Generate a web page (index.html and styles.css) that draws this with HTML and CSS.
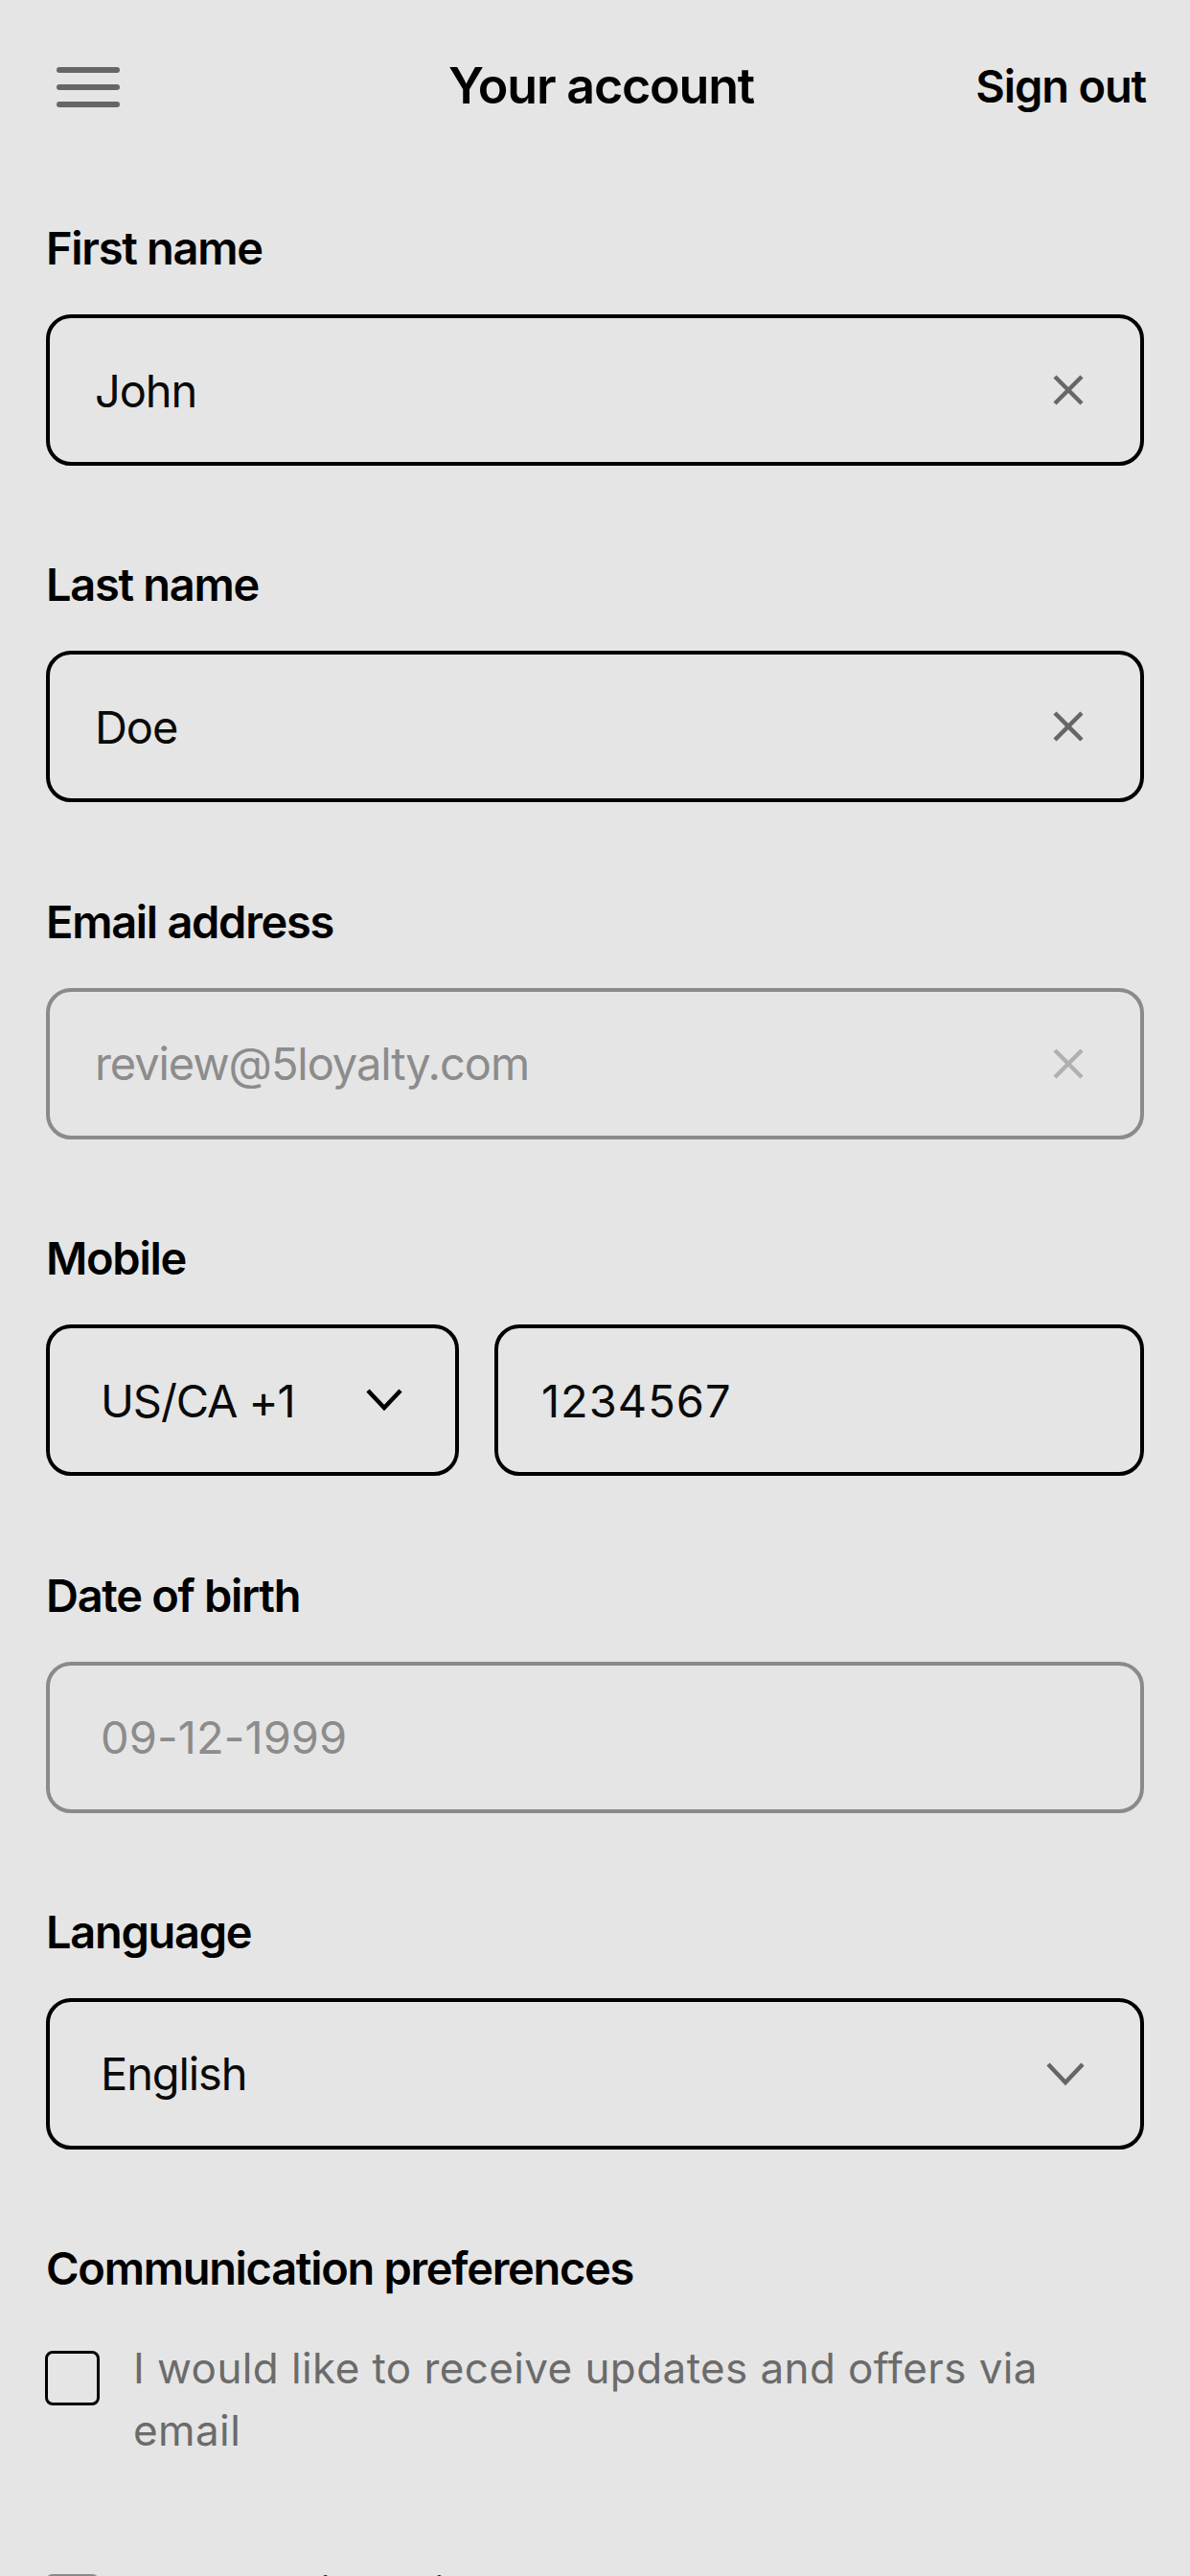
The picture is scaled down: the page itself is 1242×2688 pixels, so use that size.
FILE: index.html
```html
<!DOCTYPE html>
<html lang="en">
<head>
<meta charset="utf-8">
<title>Your account</title>
<link rel="stylesheet" href="styles.css">
</head>
<body>
<header class="topbar">
  <button class="menu-btn" aria-label="Menu">
    <svg width="66" height="44" viewBox="0 0 66 44"><g stroke="#666" stroke-width="6" stroke-linecap="round"><line x1="3" y1="4" x2="63" y2="4"/><line x1="3" y1="22" x2="63" y2="22"/><line x1="3" y1="40" x2="63" y2="40"/></g></svg>
  </button>
  <h1 class="title">Your account</h1>
  <a class="signout">Sign out</a>
</header>

<main class="form">
  <section class="field">
    <div class="label">First name</div>
    <div class="box">
      <span class="value">John</span>
      <svg class="clear" width="34" height="34" viewBox="0 0 34 34"><g stroke="#666" stroke-width="4.5"><line x1="3" y1="3" x2="31" y2="31"/><line x1="31" y1="3" x2="3" y2="31"/></g></svg>
    </div>
  </section>

  <section class="field">
    <div class="label">Last name</div>
    <div class="box">
      <span class="value">Doe</span>
      <svg class="clear" width="34" height="34" viewBox="0 0 34 34"><g stroke="#666" stroke-width="4.5"><line x1="3" y1="3" x2="31" y2="31"/><line x1="31" y1="3" x2="3" y2="31"/></g></svg>
    </div>
  </section>

  <section class="field">
    <div class="label">Email address</div>
    <div class="box box-disabled">
      <span class="value value-muted">review@5loyalty.com</span>
      <svg class="clear" width="34" height="34" viewBox="0 0 34 34"><g stroke="#b0b0b0" stroke-width="4.5"><line x1="3" y1="3" x2="31" y2="31"/><line x1="31" y1="3" x2="3" y2="31"/></g></svg>
    </div>
  </section>

  <section class="field">
    <div class="label">Mobile</div>
    <div class="phone-row">
      <div class="box box-country">
        <span class="value">US/CA +1</span>
        <svg class="chev" width="40" height="26" viewBox="0 0 40 26"><polyline points="3,3 20,21 37,3" fill="none" stroke="#000" stroke-width="4.5"/></svg>
      </div>
      <div class="box box-phone">
        <span class="value value-num">1234567</span>
      </div>
    </div>
  </section>

  <section class="field">
    <div class="label">Date of birth</div>
    <div class="box box-disabled box-select">
      <span class="value value-muted value-date">09-12-1999</span>
    </div>
  </section>

  <section class="field">
    <div class="label">Language</div>
    <div class="box box-select">
      <span class="value">English</span>
      <svg class="chev chev-lang" width="42" height="26" viewBox="0 0 42 26"><polyline points="3,3 21,22 39,3" fill="none" stroke="#666" stroke-width="4.5"/></svg>
    </div>
  </section>

  <section class="field prefs">
    <div class="label">Communication preferences</div>
    <label class="check-row">
      <span class="checkbox"></span>
      <span class="check-text">I would like to receive updates and offers via email</span>
    </label>
    <label class="check-row">
      <span class="checkbox checkbox-filled"></span>
      <span class="check-text check-text-dark">By checking this box I agree to the terms and privacy policy</span>
    </label>
  </section>
</main>
</body>
</html>
```

FILE: styles.css
```css
* { box-sizing: border-box; }

html, body {
  margin: 0;
  padding: 0;
  background: #e5e5e5;
}

body {
  font-family: Inter, "Noto Sans", "Liberation Sans", sans-serif;
  color: #000;
  width: 1242px;
  overflow: hidden;
}

.topbar {
  height: 180px;
  display: grid;
  grid-template-columns: 1fr auto 1fr;
  align-items: center;
  padding: 0 46px 0 59px;
}

.menu-btn {
  justify-self: start;
  background: none;
  border: 0;
  padding: 0;
  margin: 0;
  display: flex;
  margin-top: 2px;
}

.title {
  margin: 0;
  font-size: 52px;
  line-height: 62px;
  font-weight: 600;
  letter-spacing: -1.2px;
}

.signout {
  justify-self: end;
  font-size: 47px;
  line-height: 62px;
  font-weight: 600;
  letter-spacing: -1.15px;
}

.form {
  padding: 50px 48px 0;
  display: flex;
  flex-direction: column;
  gap: 95.4px;
}

.field {
  display: flex;
  flex-direction: column;
}

.label {
  font-size: 47px;
  line-height: 58px;
  font-weight: 600;
  letter-spacing: -1.3px;
  margin-bottom: 40px;
}

.box {
  height: 158px;
  border: 4px solid #000;
  border-radius: 26px;
  display: flex;
  align-items: center;
  justify-content: space-between;
  padding: 0 58px 0 47px;
}

.box-disabled {
  border-color: #8a8a8a;
}

.box-select {
  padding-left: 53px;
}

.value {
  font-size: 47px;
  font-weight: 400;
  letter-spacing: -1.1px;
  color: #0a0a0a;
}

.value-num {
  letter-spacing: 1px;
}

.value-date {
  letter-spacing: 0.1px;
}

.value-muted {
  color: #8c8c8c;
}

.phone-row {
  display: flex;
  gap: 37px;
}

.box-country {
  width: 431px;
  flex: none;
  padding: 0 54px 0 53px;
}

.box-phone {
  flex: 1;
  padding-left: 45px;
}

.chev-lang {
  margin-right: -1px;
}

.prefs .label {
  margin-bottom: 43px;
}

.check-row {
  display: flex;
  align-items: flex-start;
  gap: 35px;
  margin-bottom: 103px;
}

.checkbox {
  flex: none;
  width: 57px;
  height: 57px;
  margin-top: 14px;
  margin-left: -1px;
  border: 3.5px solid #000;
  border-radius: 8px;
}

.checkbox-filled {
  background: #8a8a8a;
  border-color: #8a8a8a;
}

.check-text {
  font-size: 44px;
  line-height: 65px;
  color: #6b6b6b;
  letter-spacing: 0.4px;
  padding-right: 70px;
}

.check-text-dark {
  color: #222;
}
```
